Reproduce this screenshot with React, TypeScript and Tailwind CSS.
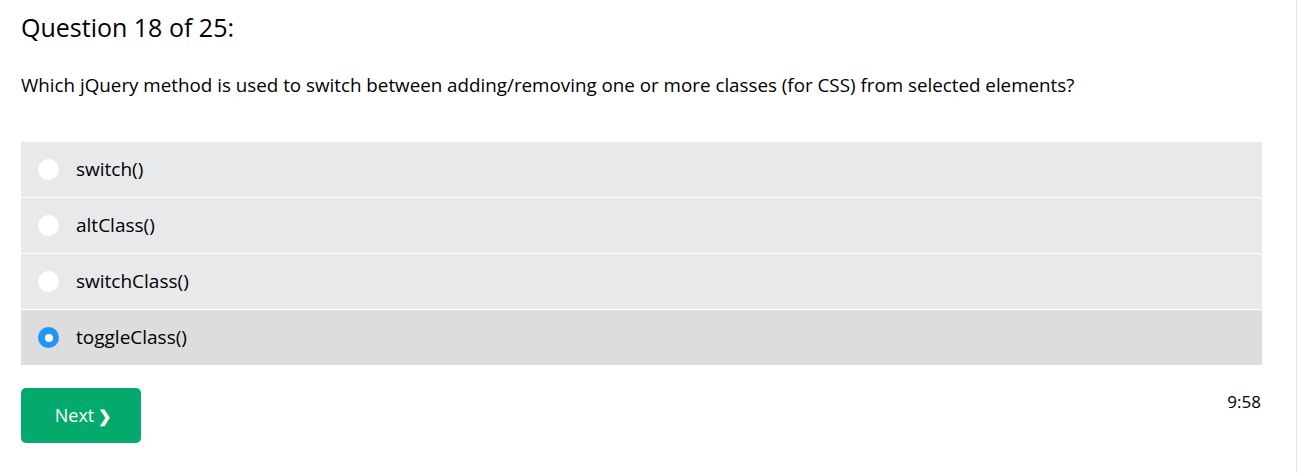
import React, { useState } from 'react'

const options = ['switch()', 'altClass()', 'switchClass()', 'toggleClass()']

export default function App() {
  const [selected, setSelected] = useState(3)

  return (
    <div className="min-h-[473px] bg-white text-black" style={{ fontFamily: '"Open Sans", "Noto Sans", sans-serif' }}>
      <div className="w-[1297px] min-h-[473px] border-r border-[#e6e6e6] pl-[21px] pr-[34px]">
        <h3 className="pt-[11px] text-[25px] leading-[32px]">Question 18 of 25:</h3>
        <p className="mt-[29px] text-[18.8px] leading-[26px]">
          Which jQuery method is used to switch between adding/removing one or more classes (for CSS) from selected elements?
        </p>
        <div className="mt-[44px] flex flex-col gap-px">
          {options.map((opt, i) => (
            <label
              key={opt}
              onClick={() => setSelected(i)}
              className={
                'flex h-[55px] cursor-pointer items-center gap-[17px] pl-[17px] ' +
                (i === selected ? 'bg-[#dddddd]' : 'bg-[#e8e9eb]')
              }
            >
              <span
                className={
                  'flex h-[21px] w-[21px] items-center justify-center rounded-full ' +
                  (i === selected ? 'bg-[#2196f3]' : 'bg-white')
                }
              >
                {i === selected && <span className="h-[8px] w-[8px] rounded-full bg-white" />}
              </span>
              <span className="text-[19px]">{opt}</span>
            </label>
          ))}
        </div>
        <div className="mt-[23px] flex items-start justify-between">
          <button className="flex h-[55px] w-[120px] items-center justify-center pl-[4px] rounded-[5px] bg-[#04aa6d] text-[18px] text-white">
            Next <span className="ml-[4px] text-[16px] font-bold">❯</span>
          </button>
          <span className="mt-[1px] mr-[1px] text-[17px]">9:58</span>
        </div>
      </div>
    </div>
  )
}
